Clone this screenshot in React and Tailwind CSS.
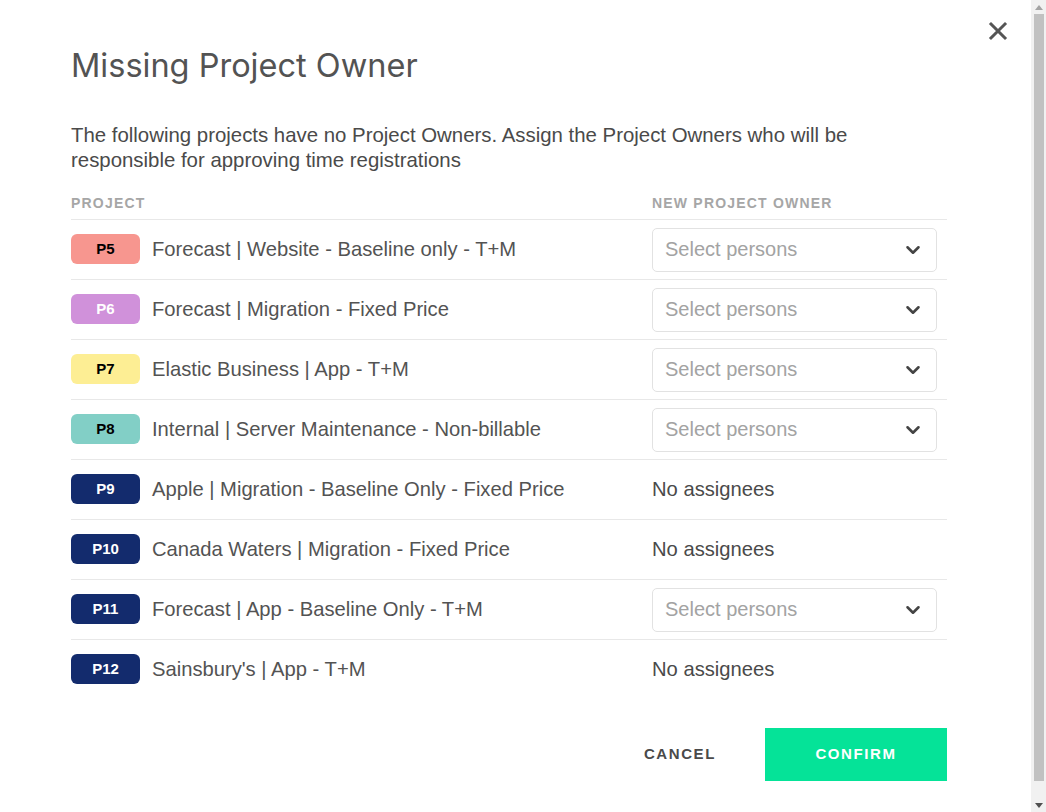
import { ChevronDown } from 'lucide-react';

const projects = [
  { id: 'P5', name: 'Forecast | Website - Baseline only - T+M', badge: 'bg-[#f7968f] text-black', owner: 'select' },
  { id: 'P6', name: 'Forecast | Migration - Fixed Price', badge: 'bg-[#d091da] text-white', owner: 'select' },
  { id: 'P7', name: 'Elastic Business | App - T+M', badge: 'bg-[#fdee94] text-black', owner: 'select' },
  { id: 'P8', name: 'Internal | Server Maintenance - Non-billable', badge: 'bg-[#82cfc6] text-black', owner: 'select' },
  { id: 'P9', name: 'Apple | Migration - Baseline Only - Fixed Price', badge: 'bg-[#132b6d] text-white', owner: 'none' },
  { id: 'P10', name: 'Canada Waters | Migration - Fixed Price', badge: 'bg-[#132b6d] text-white', owner: 'none' },
  { id: 'P11', name: 'Forecast | App - Baseline Only - T+M', badge: 'bg-[#132b6d] text-white', owner: 'select' },
  { id: 'P12', name: "Sainsbury's | App - T+M", badge: 'bg-[#132b6d] text-white', owner: 'none' },
];

function PersonSelect() {
  return (
    <button className="w-[285px] h-[44px] border border-[#e2e2e2] rounded-[5px] flex items-center justify-between pl-[12px] pr-[12px] text-left">
      <span className="text-[20px] leading-[24px] text-[#a3a3a3] -mt-[2px]">Select persons</span>
      <ChevronDown className="w-[22px] h-[22px] text-[#444]" strokeWidth={2.8} />
    </button>
  );
}

// fake browser scrollbar on the right edge
function ScrollBar() {
  return (
    <div className="w-[15px] h-[812px] bg-[#f1f1f1] flex flex-col items-center shrink-0">
      <div className="h-[14px] flex items-center justify-center">
        <svg viewBox="0 0 8 5" className="w-[8px] h-[5px]"><path d="M0 5 L4 0 L8 5 Z" fill="#a3a3a3" /></svg>
      </div>
      <div className="w-[10px] flex-1 bg-[#c1c1c1] mb-[17px]" />
      <div className="h-[14px] flex items-center justify-center">
        <svg viewBox="0 0 8 5" className="w-[8px] h-[5px]"><path d="M0 0 L4 5 L8 0 Z" fill="#505050" /></svg>
      </div>
    </div>
  );
}

export default function App() {
  return (
    <div className="h-[812px] overflow-hidden bg-white flex text-[#535353]" style={{ fontFamily: '"Liberation Sans", Arial, sans-serif' }}>
      <div className="flex-1 relative">
        {/* Close */}
        <button className="absolute right-[22px] top-[20px] w-[22px] h-[22px] flex items-center justify-center">
          <svg viewBox="0 0 20 20" className="w-[20px] h-[20px]">
            <path d="M3 3 L17 17 M17 3 L3 17" stroke="#555" strokeWidth="3" strokeLinecap="square" />
          </svg>
        </button>

        <div className="pl-[71px] pr-[84px] pt-[44px]">
          <h1 className="text-[32.5px] leading-[44px] text-[#535353]" style={{ fontFamily: 'Inter, "Liberation Sans", sans-serif' }}>
            Missing Project Owner
          </h1>
          <p className="mt-[35px] text-[20.4px] leading-[25px] text-[#4a4a4a] max-w-[820px]">
            The following projects have no Project Owners. Assign the Project Owners who will be responsible for approving time registrations
          </p>

          <div className="mt-[22px] flex text-[14px] font-bold tracking-[1.2px] text-[#a6a6a6] leading-[16px] pb-[8px]">
            <div className="w-[581px]">PROJECT</div>
            <div>NEW PROJECT OWNER</div>
          </div>

          <div>
            {projects.map((p) => (
              <div key={p.id} className="h-[60px] flex items-center border-t border-[#e8e8e8]">
                <div className="w-[581px] flex items-center">
                  <span className={`w-[69px] h-[30px] rounded-[6px] flex items-center justify-center text-[15px] font-bold ${p.badge}`}>
                    {p.id}
                  </span>
                  <span className="ml-[12px] text-[20.2px] text-[#535353]">{p.name}</span>
                </div>
                <div>
                  {p.owner === 'select' ? (
                    <PersonSelect />
                  ) : (
                    <span className="text-[20.2px] text-[#4a4a4a]">No assignees</span>
                  )}
                </div>
              </div>
            ))}
          </div>

          <div className="mt-[29px] flex justify-end items-center gap-[49px]">
            <button className="text-[15px] font-bold tracking-[1.6px] text-[#4a4a4a]">CANCEL</button>
            <button className="w-[182px] h-[53px] bg-[#05e398] text-white text-[15px] font-bold tracking-[1.6px]">CONFIRM</button>
          </div>
        </div>
      </div>
      <ScrollBar />
    </div>
  );
}
